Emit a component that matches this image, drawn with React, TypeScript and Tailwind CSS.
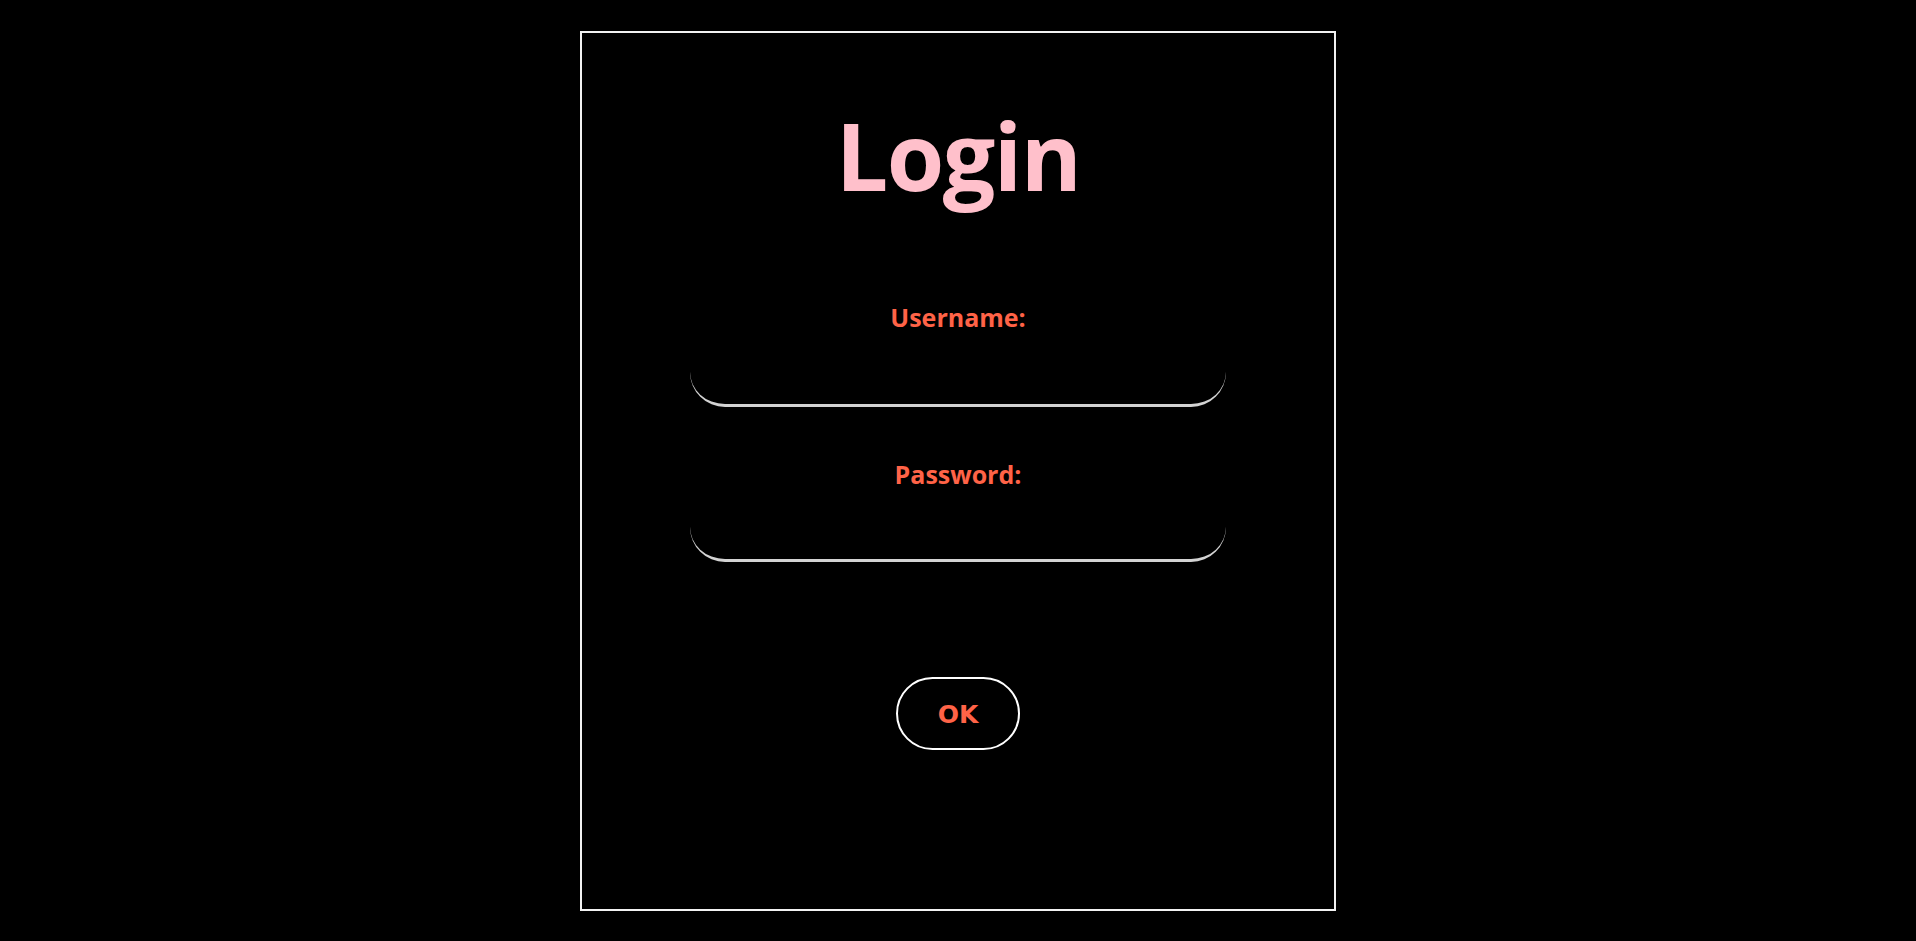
import React from "react";

export default function App() {
  return (
    <div className="min-h-[941px] w-full bg-black flex justify-center">
      <div className="mt-[31px] w-[756px] h-[880px] border-2 border-[#f2f2f2] flex flex-col items-center">
        <h1
          className="mt-[76px] h-[92px] text-[93px] leading-none font-bold text-[#ffc0cb] tracking-[-1.5px]"
          style={{ fontFamily: '"Open Sans", "Noto Sans", sans-serif' }}
        >
          Login
        </h1>
        <label
          className="mt-[104px] h-[25px] text-[25px] leading-none font-bold text-[#ff6347]"
          style={{ fontFamily: '"Open Sans", "Noto Sans", sans-serif' }}
        >
          Username:
        </label>
        <input
          type="text"
          className="mt-[27px] w-[536px] h-[50px] bg-black border-b-[3px] border-[#d3d3d3] rounded-b-[35px] outline-none text-white px-6"
        />
        <label
          className="mt-[55px] h-[25px] text-[25px] leading-none font-bold text-[#ff6347]"
          style={{ fontFamily: '"Open Sans", "Noto Sans", sans-serif' }}
        >
          Password:
        </label>
        <input
          type="password"
          className="mt-[25px] w-[536px] h-[50px] bg-black border-b-[3px] border-[#d3d3d3] rounded-b-[35px] outline-none text-white px-6"
        />
        <button
          className="mt-[115px] w-[124px] h-[73px] pt-[3px] border-2 border-white rounded-full bg-black text-[#ff6347] text-[25px] font-bold flex items-center justify-center"
          style={{ fontFamily: '"DejaVu Sans", Verdana, sans-serif' }}
        >
          OK
        </button>
      </div>
    </div>
  );
}
